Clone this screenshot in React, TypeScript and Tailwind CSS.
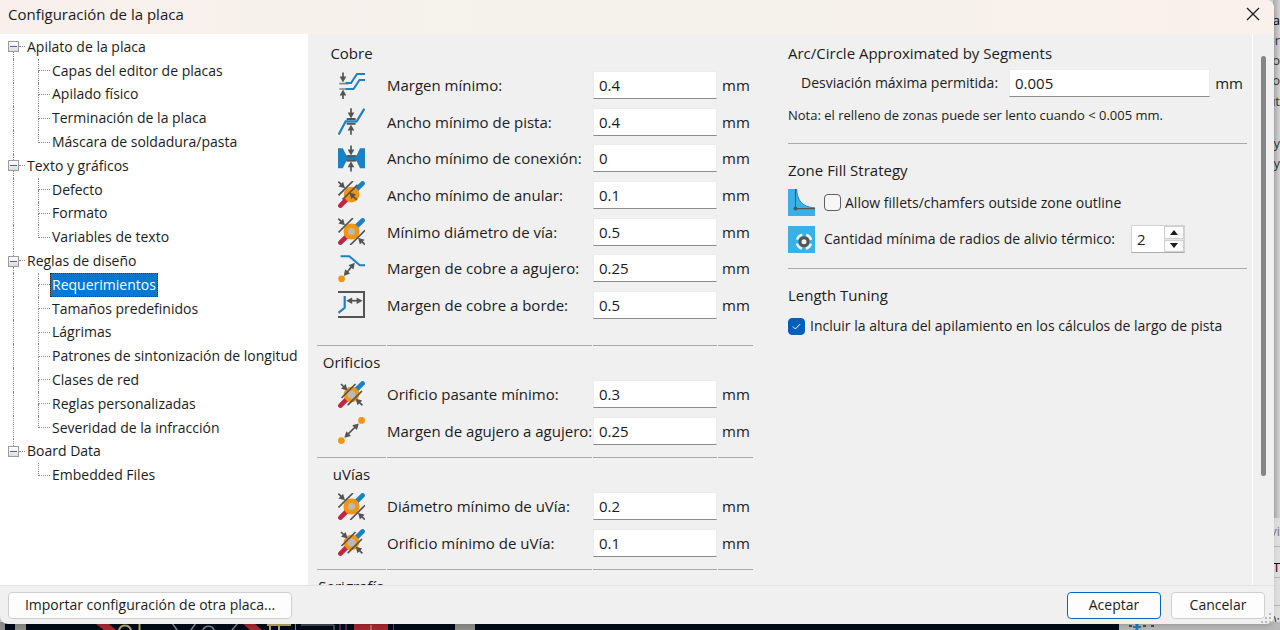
import { useState } from "react";
import type { ReactNode } from "react";

const GREY = "#545454";
const BLUE = "#1a81c4";
const ORANGE = "#f0960f";
const RED = "#bf2641";

function Icon({ children }: { children: ReactNode }) {
  return (
    <svg width="27" height="27" viewBox="0 0 27 27" fill="none" aria-hidden="true" className="shrink-0">
      {children}
    </svg>
  );
}

/* Straight arrow from (x1, y1) to its tip at (x2, y2). */
function Arrow({ x1, y1, x2, y2, both = false }: { x1: number; y1: number; x2: number; y2: number; both?: boolean }) {
  const len = Math.hypot(x2 - x1, y2 - y1);
  const ux = (x2 - x1) / len;
  const uy = (y2 - y1) / len;
  const head = (x: number, y: number, dx: number, dy: number) =>
    `${x},${y} ${x - dx * 6 - dy * 3.3},${y - dy * 6 + dx * 3.3} ${x - dx * 6 + dy * 3.3},${y - dy * 6 - dx * 3.3}`;
  const s = both ? 4 : 0;
  return (
    <g>
      <line x1={x1 + ux * s} y1={y1 + uy * s} x2={x2 - ux * 4} y2={y2 - uy * 4} stroke={GREY} strokeWidth="1.7" />
      <polygon points={head(x2, y2, ux, uy)} fill={GREY} />
      {both && <polygon points={head(x1, y1, -ux, -uy)} fill={GREY} />}
    </g>
  );
}

function ViaTracks() {
  return (
    <g strokeWidth="4.6" strokeLinecap="round">
      <line x1="24.6" y1="2.4" x2="18.5" y2="8.5" stroke={BLUE} />
      <line x1="2.4" y1="24.6" x2="8.5" y2="18.5" stroke={RED} />
    </g>
  );
}

const ClearanceIcon = () => (
  <Icon>
    <path d="M1.3 11.6H10M1.3 17H10" stroke="#888" strokeWidth="1.6" />
    <path d="M7.5 11H13L19 2H27M7.5 17H15.5L21.5 8H27" stroke={BLUE} strokeWidth="2" />
    <Arrow x1={5} y1={0.5} x2={5} y2={10.6} />
    <Arrow x1={5} y1={27} x2={5} y2={17.4} />
  </Icon>
);

const TrackWidthIcon = () => (
  <Icon>
    <path d="M0.7 26.5L7.7 13.3H18.7L26.3 0.7" stroke={BLUE} strokeWidth="2.2" />
    <path d="M8.7 11H17.6M8.7 15.8H17.6" stroke={GREY} strokeWidth="1.9" />
    <Arrow x1={13} y1={0.3} x2={13} y2={10.6} />
    <Arrow x1={13} y1={26.7} x2={13} y2={16.4} />
  </Icon>
);

const ConnectionIcon = () => (
  <Icon>
    <path d="M0 3.3H4.8L8.3 10.3H18.7L22 3.3H27V23.3H22L18.7 16.3H8.3L4.8 23.3H0Z" fill={BLUE} />
    <path d="M8.7 11.2H17.6M8.7 15.6H17.6" stroke={GREY} strokeWidth="1.9" />
    <Arrow x1={13} y1={0.5} x2={13} y2={10.6} />
    <Arrow x1={13} y1={26.5} x2={13} y2={16.2} />
  </Icon>
);

const AnnularIcon = () => (
  <Icon>
    <ViaTracks />
    <circle cx="13.6" cy="13.6" r="7.8" fill={ORANGE} />
    <path d="M0.5 14.3L15 0M4.5 18.5L19.5 3.8" stroke={GREY} strokeWidth="1.7" />
    <Arrow x1={0.3} y1={0.6} x2={7} y2={7.3} />
    <Arrow x1={18.8} y1={18.8} x2={11.3} y2={11.6} />
  </Icon>
);

const ViaDiameterIcon = () => (
  <Icon>
    <ViaTracks />
    <circle cx="13.5" cy="13.5" r="8" fill={ORANGE} />
    <circle cx="13.5" cy="13.5" r="3.5" fill="#b9b9b9" />
    <path d="M0.5 14.5L15 0M12.2 27L27 12.3" stroke={GREY} strokeWidth="1.7" />
    <Arrow x1={0.3} y1={0.6} x2={7} y2={7.3} />
    <Arrow x1={26.8} y1={26.6} x2={20} y2={19.8} />
  </Icon>
);

const CopperHoleIcon = () => (
  <Icon>
    <path d="M2.6 1.2H11.3L21.8 10.2H27" stroke={BLUE} strokeWidth="2" />
    <Arrow x1={5.8} y1={21} x2={16.8} y2={7.8} both />
    <circle cx="3.6" cy="23.8" r="3.4" fill={ORANGE} />
  </Icon>
);

const CopperEdgeIcon = () => (
  <Icon>
    <path d="M0 1H26V26H0" stroke={GREY} strokeWidth="2" />
    <path d="M0.4 21.8L6.7 16.8V5" stroke={BLUE} strokeWidth="2.2" />
    <Arrow x1={8.2} y1={9.7} x2={24.6} y2={9.7} both />
  </Icon>
);

const DrillIcon = () => (
  <Icon>
    <ViaTracks />
    <circle cx="13.5" cy="13.5" r="7.8" fill={ORANGE} />
    <circle cx="13.5" cy="13.5" r="4" fill="#b9b9b9" />
    <path d="M3.5 17L17.5 3M9.7 24.2L24 10" stroke={GREY} strokeWidth="1.7" />
    <Arrow x1={3} y1={3} x2={9.6} y2={9.6} />
    <Arrow x1={24.4} y1={24.4} x2={17.6} y2={17.6} />
  </Icon>
);

const HoleToHoleIcon = () => (
  <Icon>
    <Arrow x1={6.4} y1={20.8} x2={20.8} y2={6.4} both />
    <circle cx="23.6" cy="3.4" r="3.4" fill={ORANGE} />
    <circle cx="3.4" cy="23.6" r="3.4" fill={ORANGE} />
  </Icon>
);

const FilletIcon = () => (
  <Icon>
    <path d="M0 0H8.6C9 11.5 14.5 18.3 27 18.9V27H0Z" fill="#38b1e8" />
    <path d="M8.6 0C9 11.5 14.5 18.3 27 18.9" stroke="#2186c4" strokeWidth="1" />
    <path d="M7.5 0V19.6H27" stroke={GREY} strokeWidth="1.1" />
    <circle cx="7.5" cy="19.6" r="1.9" fill={GREY} />
  </Icon>
);

const ThermalIcon = () => (
  <Icon>
    <rect width="27" height="27" fill="#38b1e8" />
    <circle cx="16" cy="15.7" r="7.3" stroke="#f2f2f2" strokeWidth="2.4" strokeDasharray="7.4 4.07" strokeDashoffset="-2.04" />
    <circle cx="16" cy="15.7" r="4" fill="#f2f2f2" stroke={GREY} strokeWidth="3" />
  </Icon>
);

type Row = { id: string; label: string; value: string; icon: ReactNode };

const copper: Row[] = [
  { id: "clearance", label: "Margen mínimo:", value: "0.4", icon: <ClearanceIcon /> },
  { id: "track", label: "Ancho mínimo de pista:", value: "0.4", icon: <TrackWidthIcon /> },
  { id: "connection", label: "Ancho mínimo de conexión:", value: "0", icon: <ConnectionIcon /> },
  { id: "annular", label: "Ancho mínimo de anular:", value: "0.1", icon: <AnnularIcon /> },
  { id: "via", label: "Mínimo diámetro de vía:", value: "0.5", icon: <ViaDiameterIcon /> },
  { id: "copper-hole", label: "Margen de cobre a agujero:", value: "0.25", icon: <CopperHoleIcon /> },
  { id: "copper-edge", label: "Margen de cobre a borde:", value: "0.5", icon: <CopperEdgeIcon /> },
];

const holes: Row[] = [
  { id: "through-hole", label: "Orificio pasante mínimo:", value: "0.3", icon: <DrillIcon /> },
  { id: "hole-hole", label: "Margen de agujero a agujero:", value: "0.25", icon: <HoleToHoleIcon /> },
];

const microVias: Row[] = [
  { id: "uvia-diameter", label: "Diámetro mínimo de uVía:", value: "0.2", icon: <ViaDiameterIcon /> },
  { id: "uvia-hole", label: "Orificio mínimo de uVía:", value: "0.1", icon: <DrillIcon /> },
];

const COLUMNS = "grid grid-cols-[69px_205px_124px_35px] gap-x-px";
const FIELD = "h-7 w-full border border-[#ececec] border-b-[#8b8b8b] bg-white px-[5px] text-[#1a1a1a] outline-none";

function Heading({ children }: { children: ReactNode }) {
  return (
    <div className={COLUMNS}>
      <h2 className="flex h-6 items-center justify-center whitespace-nowrap">{children}</h2>
    </div>
  );
}

function Separator() {
  return (
    <div className={`${COLUMNS} mb-1`} role="separator">
      <span className="h-px bg-[#a9a9a9]" />
      <span className="h-px bg-[#a9a9a9]" />
      <span className="h-px bg-[#a9a9a9]" />
      <span className="h-px bg-[#a9a9a9]" />
    </div>
  );
}

function Rows({ rows, className }: { rows: Row[]; className: string }) {
  return (
    <div className={`mt-[2px] grid auto-rows-fr ${className}`}>
      {rows.map((r) => (
        <div key={r.id} className={`${COLUMNS} items-center`}>
          <span className="flex justify-center">{r.icon}</span>
          <label htmlFor={r.id} className="whitespace-nowrap">{r.label}</label>
          <input id={r.id} type="text" defaultValue={r.value} className={FIELD} />
          <span className="pl-1">mm</span>
        </div>
      ))}
    </div>
  );
}

const tree = [
  {
    label: "Apilato de la placa",
    items: ["Capas del editor de placas", "Apilado físico", "Terminación de la placa", "Máscara de soldadura/pasta"],
  },
  { label: "Texto y gráficos", items: ["Defecto", "Formato", "Variables de texto"] },
  {
    label: "Reglas de diseño",
    items: [
      "Requerimientos",
      "Tamaños predefinidos",
      "Lágrimas",
      "Patrones de sintonización de longitud",
      "Clases de red",
      "Reglas personalizadas",
      "Severidad de la infracción",
    ],
  },
  { label: "Board Data", items: ["Embedded Files"] },
];

function Tree() {
  const [selected, setSelected] = useState("Requerimientos");
  return (
    <div role="tree" className="grid h-[452px] auto-rows-fr text-sm">
      {tree.flatMap((group, g) => {
        const lastGroup = g === tree.length - 1;
        return [
          <div key={group.label} role="treeitem" aria-expanded="true" className="flex items-center pl-2">
            <span className="flex h-full w-[11px] flex-col items-center">
              <span className={`w-0 flex-1 border-l border-dotted ${g === 0 ? "border-transparent" : "border-[#8c8c8c]"}`} />
              <span className="flex h-[11px] w-[11px] items-center justify-center border border-[#9c9c9c] bg-linear-to-b from-white to-[#dcdcdc]">
                <span className="h-px w-[7px] bg-[#4b63a7]" />
              </span>
              <span className={`w-0 flex-1 border-l border-dotted ${lastGroup ? "border-transparent" : "border-[#8c8c8c]"}`} />
            </span>
            <span className="w-[6px] border-t border-dotted border-[#8c8c8c]" />
            <span className="whitespace-nowrap pl-[2px]">{group.label}</span>
          </div>,
          ...group.items.map((item, i) => {
            const active = item === selected;
            const last = i === group.items.length - 1;
            return (
              <div key={item} role="treeitem" aria-selected={active} className="flex items-center pl-[13px]">
                <span className={`h-full w-[25px] border-l border-dotted ${lastGroup ? "border-transparent" : "border-[#8c8c8c]"}`} />
                <span className="flex h-full w-3 flex-col">
                  <span className="flex-1 border-b border-l border-dotted border-[#8c8c8c]" />
                  <span className={`flex-1 border-l border-dotted ${last ? "border-transparent" : "border-[#8c8c8c]"}`} />
                </span>
                <button
                  type="button"
                  onClick={() => setSelected(item)}
                  className={`flex h-full items-center whitespace-nowrap border border-dotted px-px text-left ${
                    active ? "border-[#3a2a10] bg-[#0078d7] text-white" : "border-transparent"
                  }`}
                >
                  {item}
                </button>
              </div>
            );
          }),
        ];
      })}
    </div>
  );
}

function Backdrop() {
  return (
    <div aria-hidden="true" className="absolute inset-0 overflow-hidden bg-[#d2d2d2] text-[13px] leading-4 text-[#333]">
      <div className="absolute inset-y-0 right-0 w-[7px] overflow-hidden bg-linear-to-r from-[#a8a8a8] to-[#d4d4d4]">
        <span className="absolute right-0 top-3 text-black">a</span>
        <span className="absolute right-0 top-8">or</span>
        <span className="absolute right-0 top-[52px]">po</span>
        <span className="absolute right-0 top-[72px]">o</span>
        <span className="absolute right-0 top-[93px]">ut</span>
        <span className="absolute right-0 top-[135px]">y</span>
        <span className="absolute right-0 top-[155px]">y</span>
        <span className="absolute inset-x-0 bottom-0 top-[518px] bg-[#dedede]" />
        <span className="absolute inset-x-0 top-[546px] h-px bg-[#b5b5b5]" />
        <span className="absolute right-0 top-[523px] text-[#777]">vi</span>
        <span className="absolute left-0 top-[559px] text-black">Ta</span>
        <span className="absolute inset-x-0 top-[577px] h-px bg-[#b5b5b5]" />
        <span className="absolute inset-x-0 top-[605px] h-px bg-[#b5b5b5]" />
        <span className="absolute right-0 top-[612px]">):</span>
      </div>
      <svg className="absolute bottom-0 left-0" width="1280" height="8" viewBox="0 0 1280 8" fill="none">
        <rect width="1119" height="8" fill="#020c1a" />
        <rect width="5" height="8" fill="#8f8f8c" />
        <rect x="15" width="11" height="8" fill="#8f8f8c" />
        <path d="M96 2H109L116 8H104Z" fill="#a62a2f" />
        <path d="M119 8C121 2 129 2 131 8" stroke="#b8ab68" strokeWidth="2" />
        <path d="M139.500 1V8" stroke="#b8ab68" strokeWidth="2" />
        <path d="M172 1L177 8M196 1L191 8M203 8C205 3 212 3 214 8M238 1L232 8" stroke="#81858c" strokeWidth="1.500" />
        <path d="M242 1H254L262 8H250Z" fill="#a62a2f" />
        <path d="M267 3H291M270 3V8M279 3V8" stroke="#b8ab68" strokeWidth="2" />
        <path d="M295.500 1V8M301 3H334V8" stroke="#81858c" />
        <path d="M340 8V1M346 8V1" stroke="#a33f8d" />
        <rect x="354" width="34" height="8" fill="#a62a2f" />
        <path d="M371 3V8" stroke="#d7a0a0" />
        <path d="M393.500 1V8" stroke="#70347e" />
        <rect x="455" width="20" height="8" fill="#8f8f8c" />
        <rect x="1119" width="161" height="8" fill="#b9b9b9" />
        <path d="M1137 1V8" stroke={BLUE} strokeWidth="3" />
        <path d="M1133 5H1141" stroke={BLUE} strokeWidth="2" />
        <path d="M1129 4H1132M1143 4H1146M1151 4H1154" stroke="#4c4c4c" strokeWidth="2" />
      </svg>
    </div>
  );
}

export default function App() {
  return (
    <div className="relative h-screen overflow-hidden pb-[6px] pr-[6px] font-['Open_Sans','Noto_Sans',sans-serif] text-[15px] leading-5 text-[#1c1c1c]">
      <Backdrop />
      <div role="dialog" aria-labelledby="dialog-title" className="relative flex h-full flex-col overflow-hidden rounded-b-lg rounded-tr-lg bg-[#f0f0f0] shadow-md">
        <header className="flex h-[34px] shrink-0 items-center justify-between bg-linear-to-r from-[#f9f0ed] via-[#f4f2eb] to-[#faf0ec] pb-[6px] pl-2 pr-[13px]">
          <h1 id="dialog-title" className="text-[15px]">Configuración de la placa</h1>
          <button type="button" aria-label="Cerrar" className="flex h-4 w-4 items-center justify-center">
            <svg width="14" height="14" viewBox="0 0 14 14" stroke="#1c1c1c" strokeWidth="1.3" aria-hidden="true">
              <path d="M1 1L13 13M13 1L1 13" />
            </svg>
          </button>
        </header>

        <main className="flex min-h-0 flex-1">
          <nav className="w-[308px] shrink-0 overflow-hidden bg-white pt-px">
            <Tree />
          </nav>

          <div className="flex min-w-0 flex-1 items-start gap-[35px] self-stretch overflow-hidden pl-[9px] pr-[5px] pt-[7px]">
            <section className="shrink-0">
              <Heading>Cobre</Heading>
              <Rows rows={copper} className="mb-[22px] h-64" />
              <Separator />
              <Heading>Orificios</Heading>
              <Rows rows={holes} className="mb-2 h-[73px]" />
              <Separator />
              <Heading>uVías</Heading>
              <Rows rows={microVias} className="mb-2 h-[73px]" />
              <Separator />
              <Heading>Serigrafía</Heading>
            </section>

            <section className="min-w-0 flex-1">
              <h2 className="flex h-6 items-center">Arc/Circle Approximated by Segments</h2>
              <div className="mt-1 flex items-center pl-[13px] pr-1">
                <label htmlFor="deviation" className="w-[208px] shrink-0 whitespace-nowrap text-sm">Desviación máxima permitida:</label>
                <input id="deviation" type="text" defaultValue="0.005" className={`${FIELD} min-w-0 flex-1`} />
                <span className="pl-[5px]">mm</span>
              </div>
              <p className="mt-2 text-[13px]">Nota: el relleno de zonas puede ser lento cuando &lt; 0.005 mm.</p>
              <hr className="mt-[18px] border-[#a9a9a9]" />

              <h2 className="mt-[14px] flex h-6 items-center">Zone Fill Strategy</h2>
              <div className="mt-[7px] flex items-center">
                <FilletIcon />
                <input id="fillets" type="checkbox" className="ml-[9px] h-[17px] w-[17px] appearance-none rounded-[4px] border border-[#5f5f5f] bg-[#f6f6f6] checked:bg-[#005fb8]" />
                <label htmlFor="fillets" className="whitespace-nowrap pl-1 text-sm">Allow fillets/chamfers outside zone outline</label>
              </div>
              <div className="mt-[9px] flex items-center">
                <ThermalIcon />
                <label htmlFor="spokes" className="w-[316px] whitespace-nowrap pl-[9px] text-sm">Cantidad mínima de radios de alivio térmico:</label>
                <div className="flex h-7 w-[54px] border border-[#d2d2d2] border-b-[#adadad] bg-white">
                  <input id="spokes" type="text" inputMode="numeric" defaultValue="2" className="w-8 bg-white pl-[5px] outline-none" />
                  <span className="flex flex-1 flex-col gap-px bg-[#e6e6e6]">
                    <button type="button" aria-label="Aumentar" className="flex flex-1 items-center justify-center border border-[#cfcfcf] bg-[#fbfbfb]">
                      <svg width="8" height="5" viewBox="0 0 8 5" aria-hidden="true"><path d="M4 0L8 5H0Z" fill="#1c1c1c" /></svg>
                    </button>
                    <button type="button" aria-label="Disminuir" className="flex flex-1 items-center justify-center border border-[#cfcfcf] bg-[#fbfbfb]">
                      <svg width="8" height="5" viewBox="0 0 8 5" aria-hidden="true"><path d="M4 5L8 0H0Z" fill="#1c1c1c" /></svg>
                    </button>
                  </span>
                </div>
              </div>
              <hr className="mt-[15px] border-[#a9a9a9]" />

              <h2 className="mt-[14px] flex h-6 items-center">Length Tuning</h2>
              <div className="mt-[9px] flex items-center">
                <span className="grid shrink-0">
                  <input id="stackup" type="checkbox" defaultChecked className="peer col-start-1 row-start-1 h-[17px] w-[17px] appearance-none rounded-[4px] border border-[#5f5f5f] bg-[#f6f6f6] checked:border-[#005fb8] checked:bg-[#005fb8]" />
                  <svg className="pointer-events-none invisible col-start-1 row-start-1 place-self-center peer-checked:visible" width="9" height="7" viewBox="0 0 9 7" fill="none" stroke="#fff" aria-hidden="true">
                    <path d="M0.800 3.500L3.300 6L8.200 1" />
                  </svg>
                </span>
                <label htmlFor="stackup" className="whitespace-nowrap pl-[5px] text-sm">Incluir la altura del apilamiento en los cálculos de largo de pista</label>
              </div>
            </section>
          </div>

          <div className="flex w-[22px] shrink-0 justify-center border-l border-white pt-[22px]">
            <div className="h-[420px] w-[5px] rounded-full bg-[#868686]" />
          </div>
        </main>

        <footer className="flex h-[39px] shrink-0 items-center gap-[10px] border-t border-[#e2e2e2] pl-2 pr-[9px]">
          <button type="button" className="mr-auto h-[27px] w-[284px] whitespace-nowrap rounded-[4px] border border-[#cfcfcf] bg-[#fdfdfd] text-sm">Importar configuración de otra placa...</button>
          <button type="button" className="h-[27px] w-[94px] rounded-[4px] border border-[#0067c0] bg-[#fdfdfd] text-sm">Aceptar</button>
          <button type="button" className="h-[27px] w-[94px] rounded-[4px] border border-[#cfcfcf] bg-[#fdfdfd] text-sm">Cancelar</button>
        </footer>
        <svg className="absolute bottom-0 right-0" width="13" height="11" viewBox="0 0 13 11" fill="#b9b9b9" aria-hidden="true">
          <path d="M8 0h2v2h-2zM4 4h2v2h-2zM8 4h2v2h-2zM0 8h2v2h-2zM4 8h2v2h-2zM8 8h2v2h-2z" />
        </svg>
      </div>
    </div>
  );
}
